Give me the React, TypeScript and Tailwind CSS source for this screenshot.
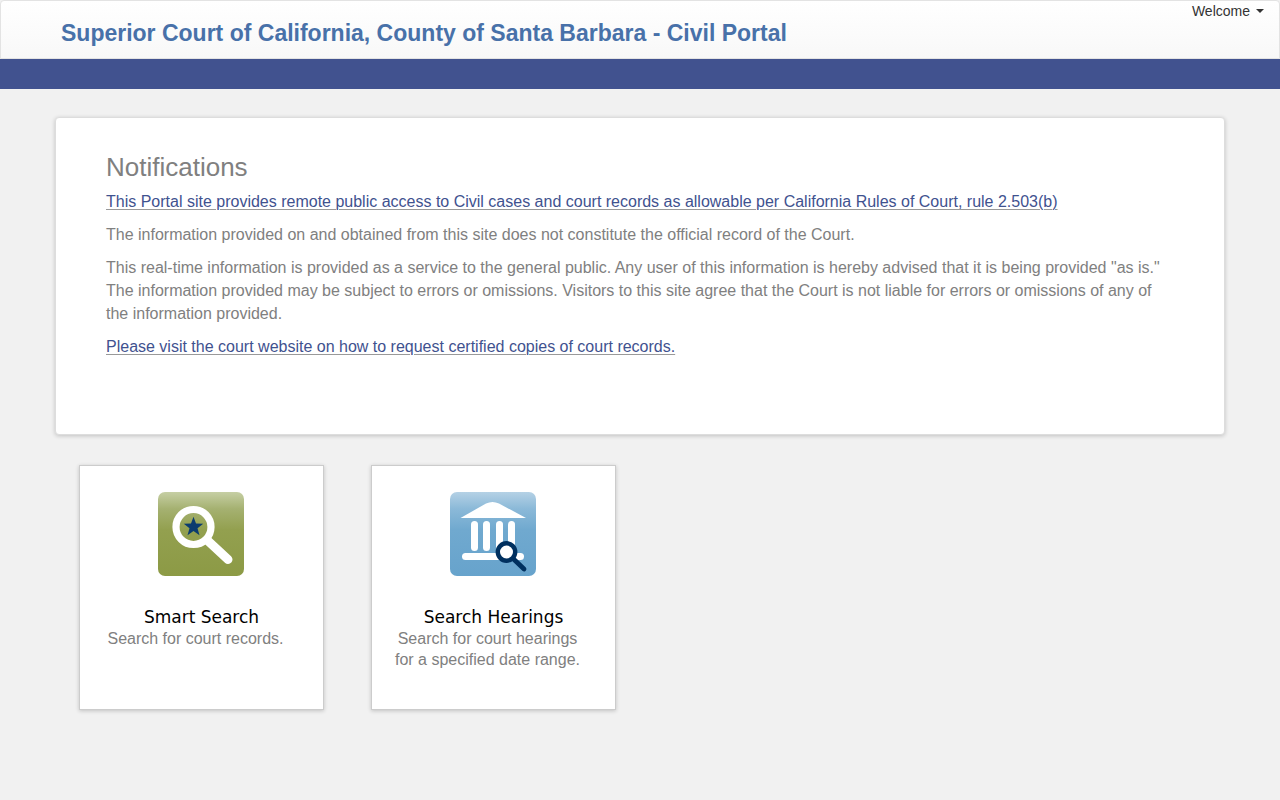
import type { ReactNode } from "react";

function SmartSearchIcon() {
  return (
    <svg width="86" height="84" viewBox="0 0 86 84" aria-hidden="true">
      <defs>
        <linearGradient id="smart-bg" x1="0" y1="0" x2="0" y2="1">
          <stop offset="0" stopColor="#c6cfa4" />
          <stop offset="0.2" stopColor="#a5b171" />
          <stop offset="0.45" stopColor="#93a04f" />
          <stop offset="1" stopColor="#8c9a45" />
        </linearGradient>
      </defs>
      <rect width="86" height="84" rx="7" fill="url(#smart-bg)" />
      <circle cx="35.5" cy="35" r="17.5" fill="none" stroke="#fff" strokeWidth="7.2" />
      <path d="M49 48 L70 67.5" stroke="#fff" strokeWidth="9" strokeLinecap="round" />
      <path
        d="M35.500 24.800 L38 31.600 L45.200 31.800 L39.500 36.200 L41.500 43.200 L35.500 39.100 L29.500 43.200 L31.500 36.200 L25.800 31.800 L33 31.600 Z"
        fill="#0b3c6f"
      />
    </svg>
  );
}

function HearingsIcon() {
  return (
    <svg width="86" height="84" viewBox="0 0 86 84" aria-hidden="true">
      <defs>
        <linearGradient id="hearings-bg" x1="0" y1="0" x2="0" y2="1">
          <stop offset="0" stopColor="#b5d1e5" />
          <stop offset="0.2" stopColor="#8bb9d8" />
          <stop offset="0.45" stopColor="#70a9cf" />
          <stop offset="1" stopColor="#67a3cc" />
        </linearGradient>
      </defs>
      <rect width="86" height="84" rx="7" fill="url(#hearings-bg)" />
      <path d="M10.5 26 L36 11.5 Q42.5 8.5 49 11.5 L76 26 Z" fill="#fff" />
      <rect x="21" y="29" width="7" height="30" rx="3.5" fill="#fff" />
      <rect x="33" y="29" width="7" height="30" rx="3.5" fill="#fff" />
      <rect x="46" y="29" width="7" height="30" rx="3.5" fill="#fff" />
      <rect x="58" y="29" width="7" height="30" rx="3.5" fill="#fff" />
      <rect x="12" y="61" width="62" height="7" rx="3.5" fill="#fff" />
      <circle cx="56.5" cy="60" r="8.7" fill="#fff" stroke="#00305f" strokeWidth="4.4" />
      <path d="M63.5 67 L74 77" stroke="#00305f" strokeWidth="4.8" strokeLinecap="round" />
    </svg>
  );
}

interface PortalCardProps {
  icon: ReactNode;
  title: string;
  description: string;
}

function PortalCard({ icon, title, description }: PortalCardProps) {
  return (
    <a
      href="#"
      className="flex min-h-[245px] w-[245px] flex-col items-center border border-[#ccc] bg-white pt-[26px] text-center shadow-[0_1px_4px_rgba(0,0,0,0.2)]"
    >
      <span className="pr-[2px]">{icon}</span>
      <h2 className="mt-[31px] font-['DejaVu_Sans',sans-serif] text-[17px] leading-[21px] text-black">
        {title}
      </h2>
      <p className="w-full pr-8 pl-5 text-base leading-[21px] text-[#808080]">{description}</p>
    </a>
  );
}

const linkClass = "text-[#3f528f] underline decoration-[#999] decoration-1 underline-offset-2";

export default function App() {
  return (
    <div className="min-h-screen bg-[#f1f1f1] font-['Liberation_Sans',Arial,sans-serif]">
      <header>
        <div className="relative h-[59px] rounded-t border border-[#e3e3e3] bg-linear-to-b from-white to-[#f8f8f8]">
          <div className="mx-auto max-w-[1170px] px-[6px] pt-4">
            <h1 className="text-[23px] leading-8 font-bold text-[#4871a9]">
              <a href="#">Superior Court of California, County of Santa Barbara - Civil Portal</a>
            </h1>
          </div>
          <button
            type="button"
            className="absolute top-0 right-[15px] flex items-center gap-[6px] text-sm leading-5 text-[#333]"
          >
            Welcome
            <span className="border-x-4 border-t-4 border-x-transparent border-t-[#333]" />
          </button>
        </div>
        <nav className="h-[30px] bg-[#41528f]" />
      </header>

      <main className="mx-auto max-w-[1170px] pt-7">
        <section className="min-h-[318px] rounded border border-[#ddd] bg-white px-[50px] pt-[33px] pb-12 text-base leading-[23px] text-[#808080] shadow-[0_1px_4px_rgba(0,0,0,0.2)]">
          <h2 className="text-[26px] leading-8">Notifications</h2>
          <div className="mt-[7px] flex flex-col gap-[10px]">
            <p>
              <a href="#" className={linkClass}>
                This Portal site provides remote public access to Civil cases and court records as
                allowable per California Rules of Court, rule 2.503(b)
              </a>
            </p>
            <p>
              The information provided on and obtained from this site does not constitute the
              official record of the Court.
            </p>
            <p>
              This real-time information is provided as a service to the general public. Any user of
              this information is hereby advised that it is being provided "as is." The information
              provided may be subject to errors or omissions. Visitors to this site agree that the
              Court is not liable for errors or omissions of any of the information provided.
            </p>
            <p>
              <a href="#" className={linkClass}>
                Please visit the court website on how to request certified copies of court records.
              </a>
            </p>
          </div>
        </section>

        <div className="mt-[30px] flex flex-wrap gap-[47px] px-6 pb-8">
          <PortalCard
            icon={<SmartSearchIcon />}
            title="Smart Search"
            description="Search for court records."
          />
          <PortalCard
            icon={<HearingsIcon />}
            title="Search Hearings"
            description="Search for court hearings for a specified date range."
          />
        </div>
      </main>
    </div>
  );
}
